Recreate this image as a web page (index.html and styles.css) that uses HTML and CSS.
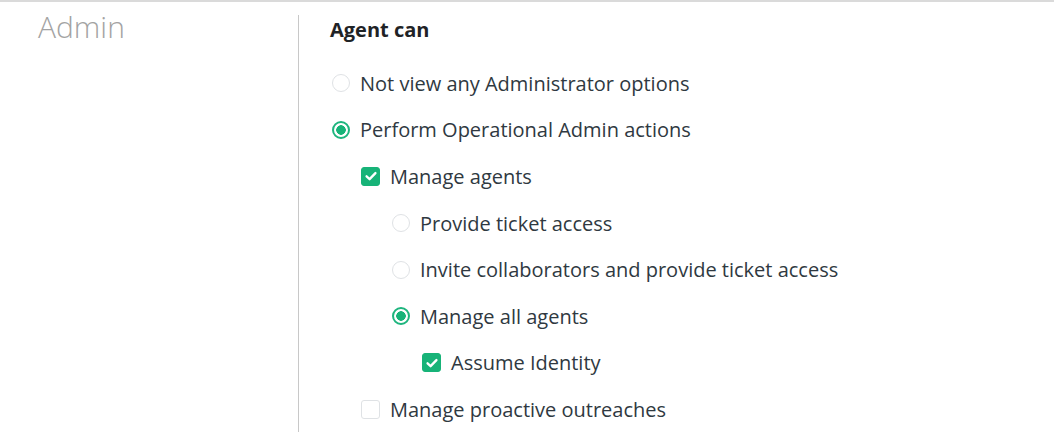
FILE: index.html
```html
<!DOCTYPE html>
<html>
<head>
<meta charset="utf-8">
<link rel="stylesheet" href="styles.css">
</head>
<body>
<div class="topline"></div>
<div class="section">
  <div class="side"><h2 class="side-title">Admin</h2></div>
  <div class="main">
    <div class="heading">Agent can</div>
    <ul class="options">
      <li class="opt lvl0"><span class="radio"></span><span class="label">Not view any Administrator options</span></li>
      <li class="opt lvl0"><span class="radio on"></span><span class="label">Perform Operational Admin actions</span></li>
      <li class="opt lvl1"><span class="check on"><svg viewBox="0 0 12 12" width="14" height="14"><path d="M2.2 6.3 L4.8 8.7 L9.8 3.5" fill="none" stroke="#fff" stroke-width="2" stroke-linecap="round" stroke-linejoin="round"/></svg></span><span class="label">Manage agents</span></li>
      <li class="opt lvl2"><span class="radio"></span><span class="label">Provide ticket access</span></li>
      <li class="opt lvl2"><span class="radio"></span><span class="label">Invite collaborators and provide ticket access</span></li>
      <li class="opt lvl2"><span class="radio on"></span><span class="label">Manage all agents</span></li>
      <li class="opt lvl3"><span class="check on"><svg viewBox="0 0 12 12" width="14" height="14"><path d="M2.2 6.3 L4.8 8.7 L9.8 3.5" fill="none" stroke="#fff" stroke-width="2" stroke-linecap="round" stroke-linejoin="round"/></svg></span><span class="label">Assume Identity</span></li>
      <li class="opt lvl1"><span class="check"></span><span class="label">Manage proactive outreaches</span></li>
    </ul>
  </div>
</div>
</body>
</html>
```

FILE: styles.css
```css
html, body {
  margin: 0;
  padding: 0;
  background: #fff;
  font-family: "Open Sans", "Noto Sans", sans-serif;
  color: #2f3941;
}
body {
  height: 432px;
  overflow: hidden;
}
.topline {
  width: 1054px;
  height: 2px;
  background: #dadada;
}
.section {
  display: flex;
  margin-top: 13px;
  height: 417px;
}
.side {
  width: 298px;
  flex: none;
}
.side-title {
  margin: -4px 0 0;
  padding-left: 38px;
  font-size: 30px;
  font-weight: 300;
  color: #a3a3a3;
  line-height: 32px;
}
.main {
  border-left: 1px solid #c8c8c8;
  padding-left: 31px;
  flex: 1;
}
.heading {
  font-size: 20px;
  font-weight: 700;
  line-height: 30px;
  height: 30px;
  color: #1f2326;
}
.options {
  list-style: none;
  margin: 15px 0 0;
  padding: 0;
}
.opt {
  display: flex;
  align-items: center;
  height: 46.6px;
  font-size: 20px;
}
.lvl0 { padding-left: 2px; }
.lvl1 { padding-left: 31px; }
.lvl2 { padding-left: 62px; }
.lvl3 { padding-left: 92px; }
.radio {
  box-sizing: border-box;
  width: 18px;
  height: 18px;
  border-radius: 50%;
  border: 1px solid #dfe2e5;
  background: #fff;
  flex: none;
  margin-right: 10px;
}
.radio.on {
  border: 2px solid #1eb57e;
  background: radial-gradient(circle, #17b378 0 4.5px, #fff 5px);
}
.check {
  box-sizing: border-box;
  width: 19px;
  height: 19px;
  border-radius: 3px;
  border: 1px solid #dfe2e5;
  background: #fff;
  flex: none;
  margin-right: 10px;
  display: flex;
  align-items: center;
  justify-content: center;
}
.check.on {
  background: #17b378;
  border-color: #17b378;
}
.label {
  white-space: nowrap;
}
```
